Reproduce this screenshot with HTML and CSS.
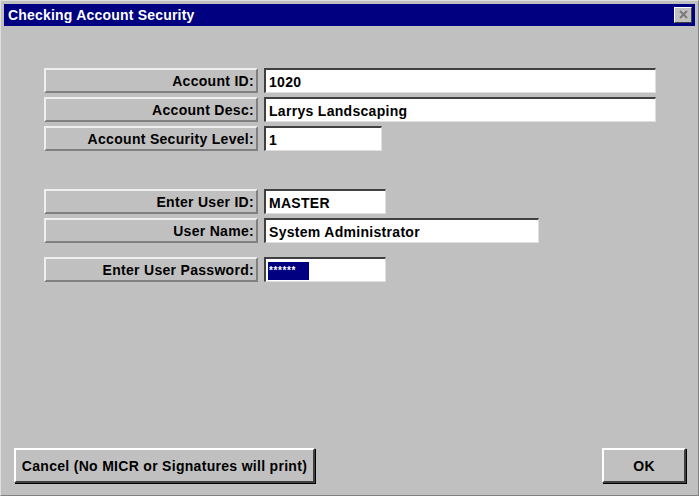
FILE: index.html
```html
<!DOCTYPE html>
<html>
<head>
<meta charset="utf-8">
<title>Checking Account Security</title>
<link rel="stylesheet" href="styles.css">
</head>
<body>
<div class="window">
  <div class="titlebar">
    <span class="title">Checking Account Security</span>
    <span class="close">
      <svg width="11" height="10" viewBox="0 0 11 10"><path d="M2 1 L9 8 M9 1 L2 8" stroke="#7a7a7a" stroke-width="2" fill="none"/></svg>
    </span>
  </div>
  <div class="client">
    <div class="form">
      <div class="group">
        <div class="row"><div class="label">Account ID:</div><div class="field wide">1020</div></div>
        <div class="row"><div class="label">Account Desc:</div><div class="field wide">Larrys Landscaping</div></div>
        <div class="row"><div class="label">Account Security Level:</div><div class="field short">1</div></div>
      </div>
      <div class="group second">
        <div class="row"><div class="label">Enter User ID:</div><div class="field mid">MASTER</div></div>
        <div class="row"><div class="label">User Name:</div><div class="field name">System Administrator</div></div>
        <div class="row pw"><div class="label">Enter User Password:</div><div class="field mid"><span class="sel">******</span></div></div>
      </div>
    </div>
    <div class="buttons">
      <button class="btn cancel">Cancel (No MICR or Signatures will print)</button>
      <button class="btn ok">OK</button>
    </div>
  </div>
</div>
</body>
</html>
```
FILE: styles.css
```css
html, body {
  margin: 0;
  padding: 0;
  width: 699px;
  height: 496px;
  background: #c0c0c0;
  overflow: hidden;
  font-family: "Liberation Sans", Arial, sans-serif;
  font-weight: bold;
  font-size: 14px;
  letter-spacing: 0.3px;
  color: #000;
}

.window {
  box-sizing: border-box;
  width: 699px;
  height: 496px;
  padding: 3px;
  border-top: 1px solid #dfdfdf;
  border-left: 1px solid #dfdfdf;
  border-right: 1px solid #808080;
  border-bottom: 1px solid #808080;
  display: flex;
  flex-direction: column;
}

.titlebar {
  height: 22px;
  background: #000080;
  color: #fff;
  display: flex;
  align-items: center;
  justify-content: space-between;
  padding: 0 4px 0 4px;
  flex: none;
}

.title {
  font-size: 14px;
  letter-spacing: 0.2px;
}

.close {
  width: 16px;
  height: 14px;
  background: #c0c0c0;
  border-top: 1px solid #fff;
  border-left: 1px solid #fff;
  border-right: 1px solid #404040;
  border-bottom: 1px solid #404040;
  display: flex;
  align-items: center;
  justify-content: center;
  margin-right: -1px;
}

.client {
  flex: 1;
  display: flex;
  flex-direction: column;
  justify-content: space-between;
  padding: 42px 9px 9px 10px;
}

.form {
  padding-left: 30px;
  display: flex;
  flex-direction: column;
}

.group {
  display: flex;
  flex-direction: column;
  gap: 4px;
}

.group.second {
  margin-top: 38px;
}

.row {
  display: flex;
  align-items: stretch;
  gap: 6px;
  height: 25px;
}

.row.pw {
  margin-top: 10px;
}

.label {
  box-sizing: border-box;
  width: 214px;
  border-top: 2px solid #efefef;
  border-left: 2px solid #efefef;
  border-right: 2px solid #808080;
  border-bottom: 2px solid #808080;
  display: flex;
  align-items: center;
  justify-content: flex-end;
  padding-right: 2px;
  white-space: nowrap;
}

.field {
  box-sizing: border-box;
  background: #fff;
  border-top: 2px solid #404040;
  border-left: 2px solid #404040;
  border-right: 1px solid #dfdfdf;
  border-bottom: 1px solid #dfdfdf;
  display: flex;
  align-items: center;
  padding: 2px 3px 0 3px;
  white-space: nowrap;
}

.field.wide { width: 392px; }
.field.short { width: 118px; }
.field.mid { width: 122px; }
.field.name { width: 275px; }

.sel {
  background: #000080;
  color: #fff;
  font-size: 10px;
  line-height: 18px;
  width: 40px;
  height: 18px;
  padding-left: 1px;
  letter-spacing: 0.6px;
  margin-left: -1px;
}

.buttons {
  display: flex;
  justify-content: space-between;
  align-items: flex-end;
}

.btn {
  font-family: "Liberation Sans", Arial, sans-serif;
  font-weight: bold;
  font-size: 14px;
  letter-spacing: 0.3px;
  background: #c0c0c0;
  color: #000;
  height: 35px;
  border-top: 2px solid #fff;
  border-left: 2px solid #fff;
  border-right: 2px solid #404040;
  border-bottom: 2px solid #404040;
  box-shadow: 1px 1px 0 #000;
  padding: 0;
}

.btn.cancel { width: 301px; }
.btn.ok { width: 84px; margin-right: 0; }
```
